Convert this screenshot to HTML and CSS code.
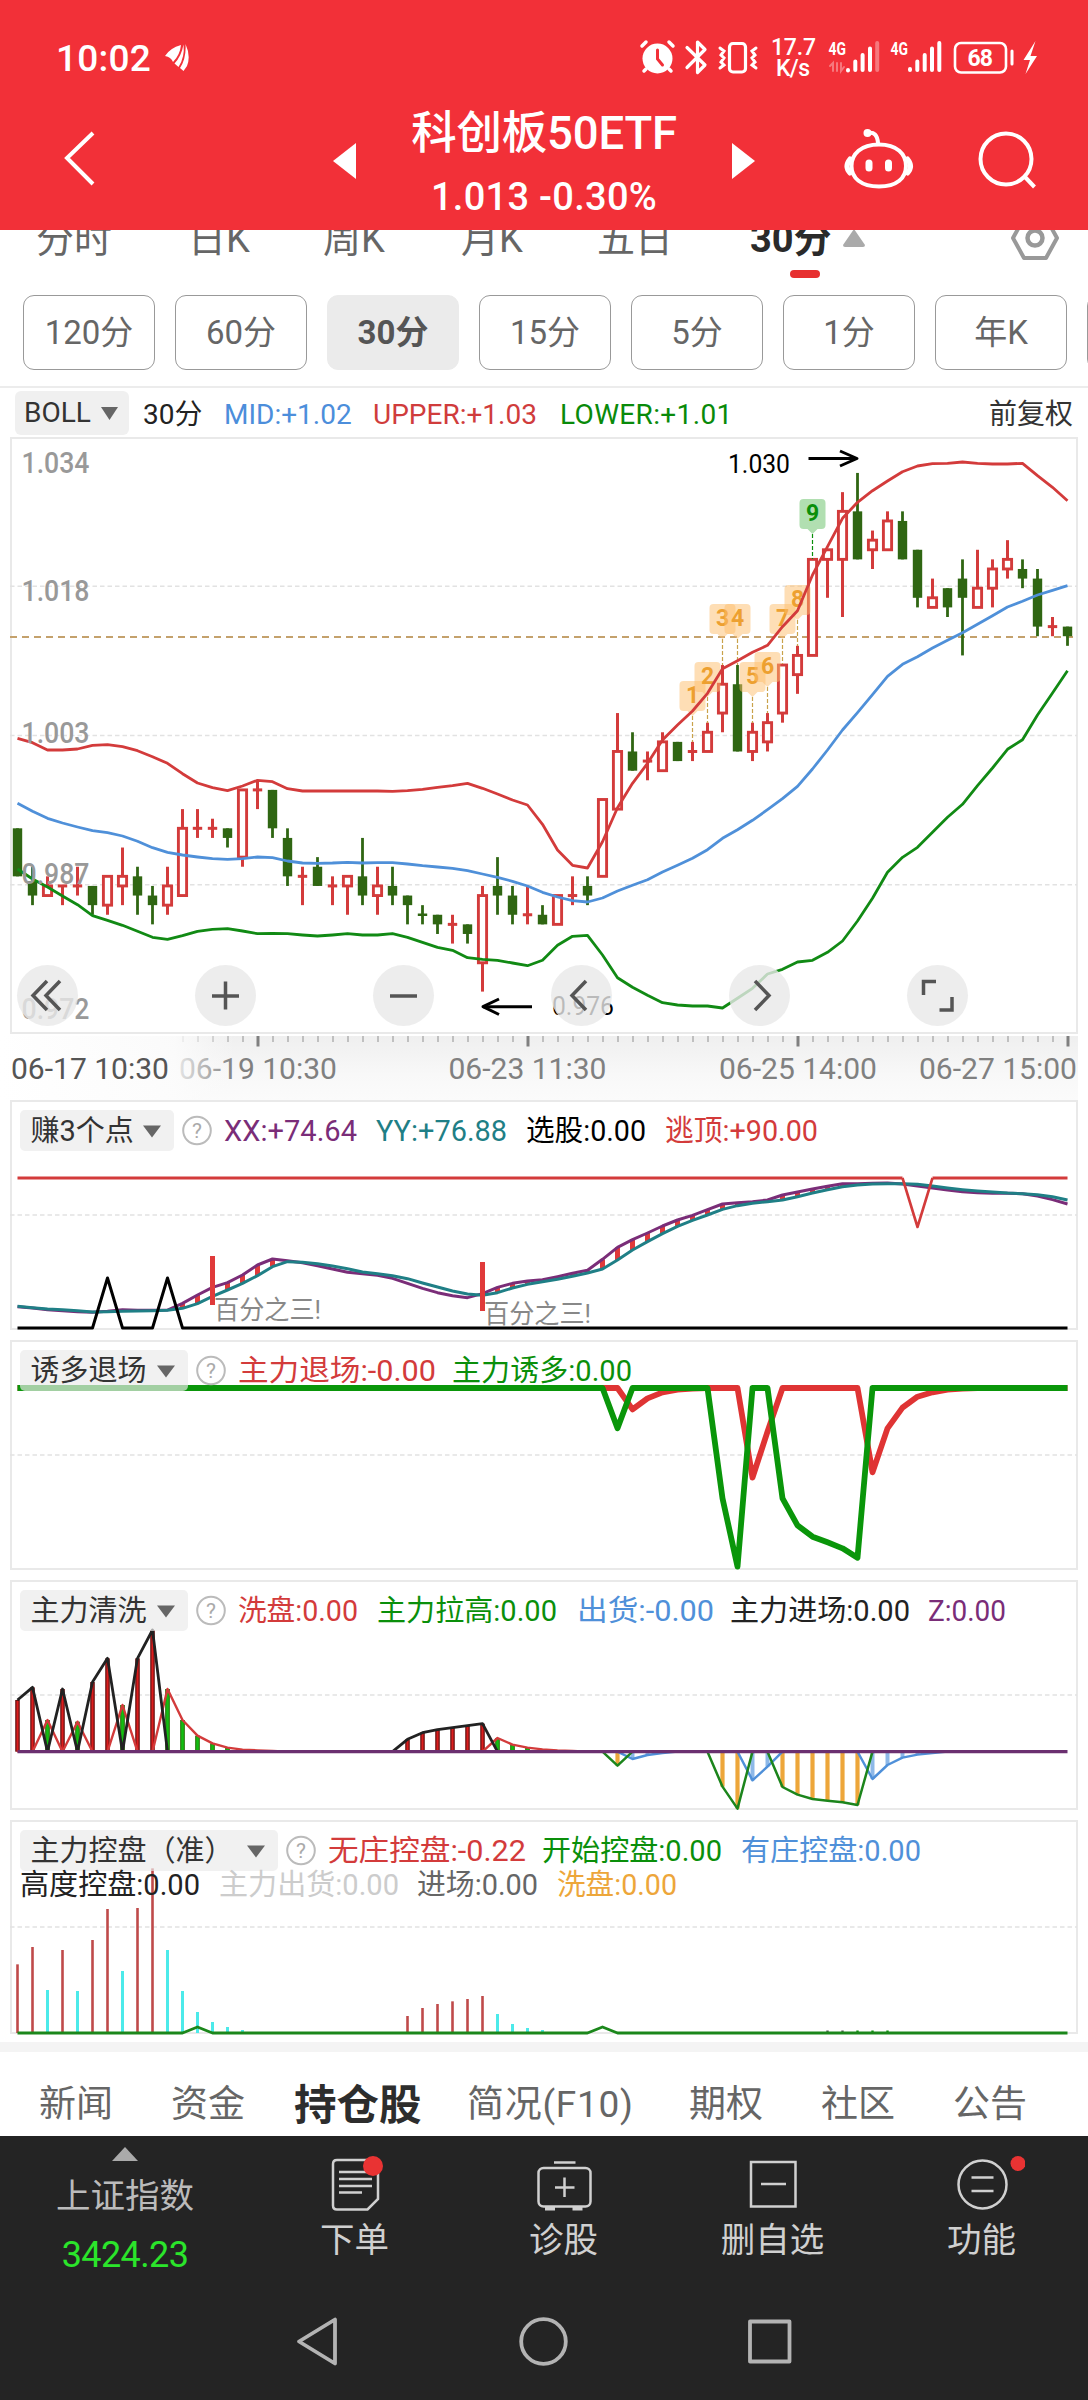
FILE: index.html
```html
<!DOCTYPE html>
<html lang="zh-CN">
<head>
<meta charset="utf-8">
<title>科创板50ETF</title>
<link rel="stylesheet" href="styles.css">
</head>
<body>
<div class="app">
  <header class="header">
    <div class="status">
      <span class="clock">10:02</span>
      <svg class="feather" width="26" height="30" viewBox="164 43 26 30" fill="#fff"><path d="M165 56Q170 48 181 45Q180 55 173 62Q171 57 165 56z"/><path d="M183.500 44.500Q185 57 178.500 67L174.500 63.500Q181.500 56 183.500 44.500z"/><path d="M185.500 44Q191 56 187 66L183.500 71L180 68Q186.500 58 185.500 44z"/></svg>
      <svg class="status-icons" width="410" height="60" viewBox="636 30 410 60" fill="none" stroke="#fff" stroke-linecap="round">
        <circle cx="657.500" cy="58.500" r="15" fill="#fff" stroke="none"/>
        <path d="M642 46l4-4M673 46l-4-4M646 69l-2 2M669 69l2 2" stroke-width="3.500"/>
        <path d="M657.500 50v9l5 6" stroke="#f23038" stroke-width="3"/>
        <path d="M687 47.500L705 65L697.500 72.500V42L705 49.500L687 67.500" stroke-width="3.200" stroke-linejoin="round"/>
        <rect x="729.500" y="43.500" width="16" height="28.500" rx="3.500" stroke-width="3.200"/>
        <path d="M720 48l4 3l-3 4l3 3l-3 4l3 3l-4 3M756 48l-4 3l3 4l-3 3l3 4l-3 3l4 3" stroke-width="3"/>
        <g fill="#fff" stroke="none">
          <text x="771" y="54.500" class="st-speed" textLength="45">17.7</text>
          <text x="776" y="75.500" class="st-speed" textLength="34">K/s</text>
          <text x="828.500" y="55" class="st-net" textLength="17.500" lengthAdjust="spacingAndGlyphs">4G</text>
          <text x="890.500" y="55" class="st-net" textLength="17.500" lengthAdjust="spacingAndGlyphs">4G</text>
          <text x="967.500" y="66" class="st-batt" textLength="25.500">68</text>
          <path d="M1035.500 41l-12 19h6.500l-4.500 14l11.500-18h-6.500z"/>
        </g>
        <path d="M833 71v-8l-3 3M837 63v8M841 63v8l3-4" stroke-width="2" opacity=".35"/>
        <path d="M848 70v.5M855.300 61.500V70M862.600 55V70M870 48.500V70M910 69v1M917.300 61.500V70M924.700 55V70M932 48.500V70M939.300 43V70" stroke-width="4"/>
        <path d="M877.200 43V70" stroke-width="4" opacity=".35"/>
        <rect x="955" y="43" width="51" height="29.500" rx="6" stroke-width="2.600"/>
        <path d="M1012 51v13" stroke-width="3"/>
      </svg>
    </div>
    <nav class="titlebar">
      <svg class="back" width="34" height="58" viewBox="62 129 34 58"><path d="M93 133L67 158L93 184" fill="none" stroke="#fff" stroke-width="4"/></svg>
      <svg class="prev" width="23" height="36" viewBox="0 0 23 36"><path d="M23 0V36L0 18z" fill="#fff"/></svg>
      <div class="title">
        <h1>科创板50ETF</h1>
        <p>1.013 -0.30%</p>
      </div>
      <svg class="next" width="23" height="36" viewBox="0 0 23 36"><path d="M0 0V36L23 18z" fill="#fff"/></svg>
      <svg class="robot" width="70" height="64" viewBox="844 127 70 64" fill="none" stroke="#fff" stroke-width="4" stroke-linecap="round">
        <path d="M879 144.500C897 144.500 906 154 906 166S897 186.500 879 186.500S851.500 178 851.500 166S861 144.500 879 144.500z"/>
        <path d="M850 159q-6 7.500 0 14M907.500 159q6 7.500 0 14" stroke-width="5"/>
        <path d="M869 163v5M888.500 163v5" stroke-width="7"/>
        <path d="M868 133q9-2 10 10"/><circle cx="867.500" cy="133" r="4" fill="#fff" stroke="none"/>
      </svg>
      <svg class="search" width="62" height="62" viewBox="976 129 62 62" fill="none" stroke="#fff" stroke-width="4"><circle cx="1006" cy="159" r="25.500"/><path d="M1024.500 176.500L1034.500 187"/></svg>
    </nav>
  </header>

  <section class="tabs">
    <span>分时</span><span>日K</span><span>周K</span><span>月K</span><span>五日</span>
    <span class="on">30分</span>
    <svg class="tab-up" width="22" height="18" viewBox="0 0 22 18"><path d="M11 0L22 16q0 2-2 2H2q-2 0-2-2z" fill="#aaa"/></svg>
    <svg class="gear" width="50" height="46" viewBox="0 0 50 46" fill="none" stroke="#999" stroke-width="4" stroke-linejoin="round"><path d="M14 3H36L47 23L36 43H14L3 23z"/><circle cx="25" cy="23" r="7.500" stroke-width="4.500"/></svg>
  </section>
  <section class="periods">
    <button>120分</button><button>60分</button><button class="on">30分</button><button>15分</button><button>5分</button><button>1分</button><button>年K</button><button></button>
  </section>

  <section class="boll">
    <span class="drop">BOLL<svg width="17" height="13" viewBox="0 0 17 13"><path d="M0 0H17L8.500 13z" fill="#666"/></svg></span>
    <span class="p">30分</span><span class="mid">MID:+1.02</span><span class="up">UPPER:+1.03</span><span class="low">LOWER:+1.01</span>
    <span class="adj">前复权</span>
  </section>

  <section class="main-chart">
    <svg id="kline" width="1088" height="600" viewBox="0 436 1088 600"></svg>
    <div class="tools">
      <button><svg viewBox="0 0 61 61"><path d="M30 16L16 30.500L30 45M43 16L29 30.500L43 45"/></svg></button>
      <button><svg viewBox="0 0 61 61"><path d="M17 31H44M30.500 16.500V44.500"/></svg></button>
      <button><svg viewBox="0 0 61 61"><path d="M17 31H44"/></svg></button>
      <button><svg viewBox="0 0 61 61"><path d="M35 16L21 30.500L35 45"/></svg></button>
      <button><svg viewBox="0 0 61 61"><path d="M26 16L40 30.500L26 45"/></svg></button>
      <button><svg viewBox="0 0 61 61"><path d="M16.500 30V16.500H29M45 32V45H32.500"/></svg></button>
    </div>
  </section>
  <svg id="axis" class="block" width="1088" height="64" viewBox="0 1036 1088 64"></svg>
  <svg id="p1" class="block" width="1088" height="240" viewBox="0 1100 1088 240"></svg>
  <svg id="p2" class="block" width="1088" height="240" viewBox="0 1340 1088 240"></svg>
  <svg id="p3" class="block" width="1088" height="240" viewBox="0 1580 1088 240"></svg>
  <svg id="p4" class="block" width="1088" height="222" viewBox="0 1820 1088 222"></svg>

  <nav class="sections">
    <span>新闻</span><span>资金</span><span class="on">持仓股</span><span>简况(F10)</span><span>期权</span><span>社区</span><span>公告</span>
  </nav>

  <footer class="bottom">
    <div class="actions">
      <div class="index">
        <svg width="26" height="14" viewBox="0 0 26 14"><path d="M13 0L26 14H0z" fill="#aaa"/></svg>
        <b>上证指数</b><i>3424.23</i>
      </div>
      <div class="act">
        <svg width="60" height="64" viewBox="325 2152 60 64"><path d="M337 2160H374Q378 2160 378 2164V2199L367.500 2209.500H337Q333 2209.500 333 2205.500V2164Q333 2160 337 2160z"/><path d="M339 2172H372M339 2179H372M339 2186H372M339 2192.500H362"/><circle class="dot" cx="373" cy="2166" r="10"/></svg>
        <span>下单</span>
      </div>
      <div class="act">
        <svg width="60" height="64" viewBox="534 2152 60 64"><rect x="538.500" y="2168" width="52" height="38.500" rx="5"/><path d="M554 2162.500H575.500M555 2187.500H574.500M564.500 2177.500V2197"/><path d="M545 2208.500H555M572.500 2208.500H582.500" stroke-width="4"/></svg>
        <span>诊股</span>
      </div>
      <div class="act">
        <svg width="60" height="64" viewBox="743 2152 60 64"><rect x="751" y="2162" width="44.500" height="44.500"/><path d="M761 2184H786"/></svg>
        <span>删自选</span>
      </div>
      <div class="act">
        <svg width="86" height="64" viewBox="939 2152 86 64"><circle cx="982.500" cy="2184.500" r="24"/><path d="M971.500 2177.500H993.500M971.500 2191H993.500"/><circle class="dot" cx="1018" cy="2163.500" r="7.500"/></svg>
        <span>功能</span>
      </div>
    </div>
    <div class="sysnav">
      <svg width="500" height="56" viewBox="294 2313 500 56" fill="none" stroke="#b3b3b3" stroke-width="3.800" stroke-linejoin="round"><path d="M335 2319.500V2363.500L299 2341.500z"/><circle cx="543.500" cy="2341.500" r="22.300"/><rect x="750" y="2321.500" width="39.500" height="40"/></svg>
    </div>
  </footer>
</div>
<script src="charts.js"></script>
</body>
</html>
```
FILE: styles.css
```css
* { box-sizing: border-box; margin: 0; padding: 0; }
body { background: #fff; font-family: Roboto, "Noto Sans CJK SC", sans-serif; color: #333; }
.app { width: 1088px; height: 2400px; overflow: hidden; display: flex; flex-direction: column; }
.app > * { flex: none; }
button { font: inherit; color: inherit; border: 0; background: none; }
.block { display: block; }

.header { height: 230px; background: #f23038; color: #fff; position: relative; z-index: 1; }
.status { height: 100px; display: flex; align-items: flex-start; padding: 30px 0 0 56px; }
.clock { font-size: 37px; font-weight: 500; line-height: 57px; width: 108px; letter-spacing: .2px; }
.feather { margin-top: 13px; }
.status-icons { margin-left: 446px; }
.st-speed { font-size: 23px; font-weight: 500; }
.st-net { font-size: 18.500px; font-weight: 700; }
.st-batt { font-size: 23px; font-weight: 700; }
.titlebar { display: flex; align-items: flex-start; }
.back { margin: 29px 0 0 62px; }
.prev { margin: 43px 0 0 237px; }
.title { width: 376px; display: flex; flex-direction: column; align-items: center; }
.title h1 { font-size: 45.500px; font-weight: 500; line-height: 60px; margin-top: 4px; white-space: nowrap; letter-spacing: -.2px; }
.title p { font-size: 38px; font-weight: 500; line-height: 50px; margin-top: 8px; letter-spacing: .3px; white-space: nowrap; }
.next { margin-top: 43px; }
.robot { margin: 27px 0 0 89px; }
.search { margin: 29px 0 0 62px; }

.tabs { height: 65px; display: flex; align-items: flex-start; padding-left: 36px; font-size: 38px; line-height: 56px; color: #666; overflow: hidden; }
.tabs span { margin-top: -19px; white-space: nowrap; }
.tabs span:nth-child(1) { width: 152px; }
.tabs span:nth-child(2) { width: 135px; }
.tabs span:nth-child(3) { width: 138px; }
.tabs span:nth-child(4) { width: 136px; }
.tabs span:nth-child(5) { width: 153px; }
.tabs .on { width: 93px; color: #2a2a2a; font-weight: 700; display: flex; flex-direction: column; }
.tabs .on::after { content: ""; width: 30px; height: 8px; border-radius: 4px; background: #e73030; margin: 3px 0 0 40px; }
.tab-up { margin-top: -1px; }
.gear { margin: -15px 0 0 145px; }

.periods { height: 93px; display: flex; gap: 20px; padding-left: 23px; overflow: hidden; border-bottom: 2px solid #ececec; }
.periods button { flex: none; width: 132px; height: 75px; border: 1.500px solid #999; border-radius: 11px; font-size: 33px; line-height: 72px; color: #666; }
.periods .on { background: #ebebeb; border-color: #ebebeb; font-weight: 700; color: #555; }

.boll { height: 48px; padding: 3px 0 0 15px; display: flex; align-items: flex-start; font-size: 28px; line-height: 48px; white-space: nowrap; }
.drop { width: 114px; height: 44px; background: #f0f0f0; border-radius: 6px; padding-left: 9px; display: flex; align-items: center; gap: 10px; }
.boll .p { width: 81px; margin-left: 14px; color: #222; }
.mid { width: 149px; color: #4c8edb; }
.up { width: 187px; color: #d03c3c; }
.low { color: #098a0a; flex: 1; letter-spacing: .35px; }
.adj { margin-right: 15px; }

.main-chart { height: 600px; position: relative; }
.main-chart > svg { display: block; }
.tools { position: absolute; left: 17px; top: 529px; display: flex; gap: 117px; }
.tools button { width: 61px; height: 61px; border-radius: 50%; background: rgba(232, 232, 232, .8); }
.tools svg { display: block; fill: none; stroke: #555; stroke-width: 3.500; }

svg text { font-family: Roboto, "Noto Sans CJK SC", sans-serif; }
.ylab { font-size: 29px; font-weight: 500; fill: #999; }
.xlab { font-size: 29px; fill: #808080; }
.xlab.first { fill: #555; }
.mark { font-size: 25px; fill: #000; }
.pin { font-size: 23px; font-weight: 700; text-anchor: middle; }
.legend { font-size: 29px; }
.name { font-size: 29px; fill: #333; }
.help { font-size: 21px; fill: #aaa; text-anchor: middle; }
.note { font-size: 26px; fill: #888; }

.sections { height: 94px; border-top: 10px solid #f4f4f4; display: flex; align-items: center; padding: 14px 0 0 39px; font-size: 37px; color: #666; white-space: nowrap; }
.sections span:nth-child(1) { width: 132px; }
.sections span:nth-child(2) { width: 123px; }
.sections span:nth-child(3) { width: 173px; font-size: 42.500px; font-weight: 700; color: #2d2d2d; }
.sections span:nth-child(4) { width: 222px; letter-spacing: .7px; }
.sections span:nth-child(5) { width: 132px; }
.sections span:nth-child(6) { width: 132px; }

.bottom { height: 264px; background: #242424; color: #d0d0d0; }
.actions { height: 160px; display: flex; }
.index { width: 250px; display: flex; flex-direction: column; align-items: center; padding-top: 11px; }
.index b { font-weight: 400; font-size: 34.500px; line-height: 50px; margin-top: 10px; color: #bbb; }
.index i { font-style: normal; font-size: 36px; line-height: 50px; margin-top: 9px; color: #2be52b; letter-spacing: -.6px; }
.act { width: 209px; display: flex; flex-direction: column; align-items: center; padding-top: 16px; font-size: 34.500px; }
.act span { line-height: 50px; margin-top: -1px; }
.act svg { fill: none; stroke: #d0d0d0; stroke-width: 2.500; }
.act .dot { fill: #e93333; stroke: none; }
.sysnav { padding: 17px 0 0 294px; }
```
FILE: charts.js
```js
const NS = 'http://www.w3.org/2000/svg';
const X = i => 17.5 + 15 * i;
const RED = '#d33b3b', GREEN = '#0a8f0a', DARK = '#2f6612', BLUE = '#4f90d9', PURPLE = '#7a2d78', TEAL = '#1f7f86', ORANGE = '#eda63a';

function add(parent, tag, attrs, text) {
  const el = document.createElementNS(NS, tag);
  for (const k in attrs) el.setAttribute(k, attrs[k]);
  if (text !== undefined) el.textContent = text;
  parent.appendChild(el);
  return el;
}
const get = id => document.getElementById(id);
const line = (p, x1, y1, x2, y2, stroke, w, extra) => add(p, 'line', { x1, y1, x2, y2, stroke, 'stroke-width': w, ...extra });
const poly = (p, pts, stroke, w) => add(p, 'polyline', { points: pts.map(a => a.join(',')).join(' '), fill: 'none', stroke, 'stroke-width': w, 'stroke-linejoin': 'round' });
const label = (p, cls, x, y, s, len, fill) => {
  const a = { class: cls, x, y };
  if (len) { a.textLength = len; a.lengthAdjust = 'spacingAndGlyphs'; }
  if (fill) a.style = 'fill:' + fill;
  return add(p, 'text', a, s);
};
const frame = (p, top, bottom) => add(p, 'rect', { x: 11, y: top, width: 1066, height: bottom - top, fill: '#fff', stroke: '#e9e9e9', 'stroke-width': 2 });
const grid = (p, y) => line(p, 10, y, 1077, y, '#e2e2e2', 1.5, { 'stroke-dasharray': '4.5 3' });

/* price chart: candles are [open/close top, bottom, high, low, kind], in thousandths */
const candles = [
  [993,988,993,988,'g'],[987.5,986,989,985,'g'],[987,986,988,986,'r'],[987,987,987,985,'r'],[987,987,989,986,'r'],
  [987,985,987,984,'g'],[988,985,988,984,'r'],[988,987,991,985,'r'],[988,986,989,984,'g'],[986,985,987,983,'g'],
  [987,985,989,984,'r'],[993,986,995,986,'r'],[993,993,995,992,'r'],[993,993,994,992,'r'],[993,992,993,991,'g'],
  [997,990,997,989,'r'],[997,997,998,995,'r'],[997,993,997,992,'g'],[992,988,993,987,'g'],[988,988,989,985,'r'],
  [989,987,990,987,'g'],[987,987,988,985,'r'],[988,987,988,984,'r'],[988,986,992,985,'g'],[987,986,989,984,'r'],
  [987,986,989,985,'g'],[986,985,986,983,'g'],[984,984,985,983,'g'],[984,983,984,982,'g'],[983,983,984,981,'r'],
  [983,982,983,981,'g'],[986,979,987,976,'r'],[987,986,990,984,'g'],[986,984,987,983,'g'],[984,984,987,983,'r'],
  [984,983,985,983,'g'],[986,983,986,983,'r'],[986,986,988,985,'r'],[987,986,988,985,'g'],[996,988,996,988,'r'],
  [1001,995,1005,995,'r'],[1001,999,1003,999,'g'],[1000,1000,1001,998,'r'],[1002,999,1003,999,'r'],[1002,1000,1002,1000,'g'],
  [1001,1001,1002,1000,'r'],[1003,1001,1004,1001,'r'],[1008,1005,1010,1003,'r'],[1008,1001,1010,1001,'g'],[1003,1001,1004,1000,'r'],
  [1004,1002,1005,1001,'r'],[1010,1005,1010,1004,'r'],[1011,1009,1012,1007,'r'],[1021,1011,1021,1011,'r'],[1022,1021,1022,1017,'r'],
  [1026,1021,1028,1015,'r'],[1026,1021,1030,1021,'g'],[1023,1022,1024,1020,'r'],[1025,1022,1026,1022,'r'],[1025,1021,1026,1021,'g'],
  [1022,1017,1022,1016,'g'],[1017,1016,1019,1016,'r'],[1018,1016,1018,1015,'g'],[1019,1017,1021,1011,'g'],[1018,1016,1022,1016,'r'],
  [1020,1018,1021,1016,'r'],[1021,1020,1023,1019,'r'],[1020,1019,1021,1018,'g'],[1019,1014,1020,1013,'g'],[1014,1014,1015,1013,'r'],
  [1014,1013,1014,1012,'g']
];
const upper = [738.3,742.7,750,750,749,745.3,744.7,746.7,750.7,756.7,763.3,773.7,783,787.7,790.7,786,780.3,781.7,788.7,791,791,791,791,791,791,791.3,790.7,789.3,787.3,785.7,783.3,788.3,794,800,805,824.3,850,865.3,868,841.7,807.7,783.3,763.3,740,725,711,693.3,668.7,660.7,652.3,645.3,626.7,610.7,575,546.7,518.3,502.3,490.7,481,471.7,466,463.7,463.3,462,463.3,464,464,463.3,475.7,487.3,500.7];
const middle = [803.3,811.3,818.3,823,827,830.7,832.7,836,841.3,847.7,852.3,855,857,858.7,859.3,858.7,857,857.7,861,863,863.3,863,862.3,863,862.7,862.7,864,865.7,867,868.3,870.7,874,877.3,881.3,886,892.3,897,900.7,902,898,891,885.3,879.7,872,865.3,858.3,849.7,838.3,829.7,820.3,809.7,798.7,786.3,769,750,730,712.7,694.7,676.3,664.3,656.7,648,640.3,632.7,624.3,615.7,607,601.3,595,590.3,585.7];
const lower = [869,879,887,896,904.7,915.7,920.3,925.3,931.3,937.3,939.3,935.7,931.3,929.3,928.7,931,933.7,933.3,933.7,935,936,935,933.7,935,935,933.7,937.3,942.3,947.3,950.3,957.7,959.3,960.3,963,965.7,960.3,945.3,936.3,935.3,955,977.7,987.3,995.3,1002.7,1005,1006,1006,1008,998.3,988.3,974,969.3,962,960.3,952.3,941,921,898.3,872.3,857.3,847.3,832.3,817.3,804.3,785.7,768,749.3,739.7,715,693,670.7];
{
  const p = get('kline'), Y = v => 991.6 - (v - 976) * 9.605;
  frame(p, 438, 1033);
  [586.3, 735.5, 884.7].forEach(y => grid(p, y));
  line(p, 10, 637, 1077, 637, '#c4a16c', 2, { 'stroke-dasharray': '7 5' });
  candles.forEach(([t, b, h, l, k], i) => {
    const x = X(i);
    if (k === 'g') {
      line(p, x, Y(h), x, Y(l), DARK, 2.8);
      if (t === b) line(p, x - 4.7, Y(t), x + 4.7, Y(t), DARK, 2.5);
      else add(p, 'rect', { x: x - 4.7, y: Y(t), width: 9.4, height: Y(b) - Y(t), fill: DARK });
    } else if (t === b) {
      line(p, x, Y(h), x, Y(l), RED, 3);
      line(p, x - 4.7, Y(t), x + 4.7, Y(t), RED, 3);
    } else {
      line(p, x, Y(h), x, Y(t), RED, 3);
      line(p, x, Y(b), x, Y(l), RED, 3);
      add(p, 'rect', { x: x - 4.1, y: Y(t), width: 8.2, height: Y(b) - Y(t), fill: '#fff', stroke: RED, 'stroke-width': 2.9 });
    }
  });
  [[45,681,742],[46,662,723],[47,604,665],[48,604,665],[49,662,723],[50,652,713],[51,604,664],[52,585,646],[53,499,559]].forEach(([i, y, end], n) => {
    const x = X(i), g = n === 8, c = g ? '#0a8f0a' : '#eda030';
    line(p, x, y + 35, x, end, g ? c : '#c9a24a', 1.2, { 'stroke-dasharray': '4 2' });
    add(p, 'path', { d: `M${x - 9} ${y}h18q4 0 4 4v22q0 4-4 4h-4l-5 5l-5-5h-4q-4 0-4-4v-22q0-4 4-4z`, fill: g ? '#9bd69b' : '#fdbd6b', 'fill-opacity': g ? .78 : .5 });
    label(p, 'pin', x, y + 22, n + 1, 0, c);
  });
  [[upper, RED], [middle, BLUE], [lower, '#118a14']].forEach(([s, c]) => poly(p, s.map((y, i) => [X(i), y]), c, 2.8));
  [['1.034',473],['1.018',601],['1.003',742.5],['0.987',884],['0.972',1019]].forEach(([s, y]) => label(p, 'ylab', 21.5, y, s, 68));
  label(p, 'mark', 728, 472.7, '1.030', 62);
  label(p, 'mark', 552, 1015, '0.976', 62);
  poly(p, [[808.5,458.5],[856,458.5]], '#000', 3);
  poly(p, [[840,451],[857,458.5],[840,466]], '#000', 3);
  poly(p, [[532,1006.7],[483,1006.7]], '#000', 3);
  poly(p, [[499,999],[483,1006.7],[499,1014.5]], '#000', 3);
}

/* time axis */
{
  const p = get('axis');
  const d = add(p, 'defs', {});
  const v = add(d, 'linearGradient', { id: 'shade', x1: 0, y1: 0, x2: 0, y2: 1 });
  add(v, 'stop', { offset: 0, 'stop-color': '#efefef' });
  add(v, 'stop', { offset: .6, 'stop-color': '#f8f8f8' });
  add(v, 'stop', { offset: 1, 'stop-color': '#fbfbfb' });
  const h = add(d, 'linearGradient', { id: 'fade', x1: 0, y1: 0, x2: 1, y2: 0 });
  add(h, 'stop', { offset: 0, 'stop-color': '#fff' });
  add(h, 'stop', { offset: .74, 'stop-color': '#fcfcfc', 'stop-opacity': .88 });
  add(h, 'stop', { offset: 1, 'stop-color': '#fafafa', 'stop-opacity': 0 });
  add(p, 'rect', { x: 0, y: 1036, width: 1078, height: 64, fill: 'url(#shade)' });
  for (let i = 11; i <= 70; i++) {
    const major = [16, 34, 52, 70].includes(i);
    line(p, X(i) + .5, 1034, X(i) + .5, major ? 1046.5 : 1042, major ? '#808080' : '#c0c0c0', major ? 3 : 2);
  }
  [[179,'06-19 10:30'],[448.500,'06-23 11:30'],[719,'06-25 14:00'],[919,'06-27 15:00']].forEach(([x, s]) => label(p, 'xlab', x, 1079, s, 158));
  add(p, 'rect', { x: 0, y: 1036, width: 235, height: 64, fill: 'url(#fade)' });
  label(p, 'xlab first', 11, 1079, '06-17 10:30', 158);
}

function head(p, top, name, width, items) {
  add(p, 'rect', { x: 20, y: top + 9, width, height: 41, rx: 5, fill: '#ebebeb', 'fill-opacity': .68 });
  label(p, 'name', 30.5, top + 40, name);
  const tx = 20 + width - 31;
  add(p, 'path', { d: `M${tx} ${top + 24.5}h18l-9 12z`, fill: '#666' });
  const cx = 20 + width + 23;
  add(p, 'circle', { cx, cy: top + 29.5, r: 13.8, fill: 'none', stroke: '#bbb', 'stroke-width': 2 });
  label(p, 'help', cx, top + 37, '?');
  items.forEach(([s, x1, x2, c, dy]) => label(p, 'legend', x1 - 1, top + 40 + (dy || 0), s, x2 - x1 + 2, c));
}

/* panel values are in thirds of a pixel below the panel offset */
const at = off => v => off + v / 3;

{
  const p = get('p1'), Y = at(1090);
  frame(p, 1101, 1329);
  grid(p, 1215);
  const xx = [650,654,659,662,665,667,664,659,661,661,660,640,615,592,578,555,525,507,512,518,527,537,547,551,556,565,580,595,608,617,623,611,592,580,573,569,560,550,541,508,472,449,429,408,390,376,359,342,338,335,330,315,306,297,289,281,281,280,279,282,288,294,300,305,308,310,310,311,318,329,342];
  const yy = [649,653,657,659,662,666,665,664,663,662,661,655,641,619,600,580,557,530,515,517,521,528,536,546,551,557,566,579,591,603,612,616,608,594,583,575,568,559,549,537,510,480,455,431,409,391,375,358,347,340,335,330,320,309,299,290,285,282,281,281,283,288,294,299,303,306,309,311,314,320,330];
  xx.forEach((v, i) => { if (yy[i] - v > 5) line(p, X(i), Y(v), X(i), Y(yy[i]), '#e03a3a', 5); });
  poly(p, xx.map((v, i) => [X(i), Y(v)]), PURPLE, 3);
  poly(p, yy.map((v, i) => [X(i), Y(v)]), TEAL, 3);
  line(p, X(0), 1178, X(59), 1178, RED, 3);
  line(p, X(61), 1178, X(70), 1178, RED, 3);
  poly(p, [[X(59),1178],[X(60),1227],[X(61),1178]], RED, 2.6);
  const spike = i => [[X(i - 1),1328],[X(i),1278],[X(i + 1),1328]];
  poly(p, [[X(0),1328], ...spike(6), ...spike(10), [X(70),1328]], '#000', 3);
  line(p, X(13), 1256, X(13), 1305, '#e03a3a', 5);
  line(p, X(31), 1262, X(31), 1311, '#e03a3a', 5);
  label(p, 'note', 214, 1319, '百分之三!', 107);
  label(p, 'note', 484, 1323, '百分之三!', 107);
  head(p, 1101, '赚3个点', 154, [['XX:+74.64',225,356,PURPLE],['YY:+76.88',377,506,TEAL],['选股:0.00',527,645,'#000'],['逃顶:+90.00',666,817,RED]]);
}
{
  const p = get('p2'), Y = at(1340);
  frame(p, 1341, 1569);
  grid(p, 1455);
  const red = { 41:208,42:175,43:157,44:149,45:146,49:413,50:275,57:397,58:265,59:203,60:170,61:157,62:149,63:146 };
  const green = { 40:265,47:475,48:680,51:475,52:556,53:590,54:607,55:625,56:653 };
  [[red, '#df3434'], [green, '#0a960a']].forEach(([s, c]) => {
    const pts = [];
    for (let i = 0; i <= 70; i++) pts.push([X(i), Y(s[i] || 144)]);
    poly(p, pts, c, 5.8);
  });
  head(p, 1341, '诱多退场', 168, [['主力退场:-0.00',239,435,RED],['主力诱多:0.00',453,631,GREEN]]);
}
{
  const p = get('p3'), Y = at(1570), B = 545;
  frame(p, 1581, 1809);
  grid(p, 1695);
  const rb = {0:390,1:352,3:357,5:336,6:265,8:265,9:180,26:508,27:488,28:479,29:473,30:467,31:461};
  const gb = {2:450,4:455,7:405,10:357,11:450,12:497,13:520,14:533,32:504,33:524,34:533};
  const ob = {40:587,47:650,48:716,51:651,52:674,53:687,54:692,55:697,56:705};
  const bb = {41:567,42:555,43:549,49:631,50:590,57:627,58:585,59:563,60:554,61:549};
  const seg = (s, c, a, b, w) => {
    const pts = [];
    for (let i = a; i <= b; i++) pts.push([X(i), Y(s[i] || B)]);
    poly(p, pts, c, w);
  };
  for (const i in rb) { line(p, X(+i), Y(rb[i]), X(+i), Y(B), '#6b1212', 4.6); line(p, X(+i), Y(rb[i]) + 1, X(+i), Y(B), '#dd1c1c', 2); }
  for (const i in gb) { line(p, X(+i), Y(gb[i]), X(+i), Y(B), '#2f7a12', 4.8); line(p, X(+i), Y(gb[i]) + 1, X(+i), Y(B), '#10c010', 2.4); }
  for (const i in ob) line(p, X(+i), Y(B), X(+i), Y(ob[i]), ORANGE, 4.2);
  for (const i in bb) line(p, X(+i), Y(B), X(+i), Y(bb[i]), '#8db8e8', 4);
  seg({ ...gb, 15:539, 16:541, 17:543, 35:538, 36:541, 37:543 }, RED, 0, 40, 2.4);
  seg(rb, '#222', 0, 10, 2.8);
  seg(rb, '#222', 25, 32, 2.8);
  seg(bb, BLUE, 40, 62, 2.4);
  seg(ob, '#1c851c', 39, 41, 2.5);
  seg(ob, '#1c851c', 46, 57, 2.5);
  line(p, X(0), Y(B), X(70), Y(B), '#6b3070', 3.4);
  head(p, 1581, '主力清洗', 168, [['洗盘:0.00',239,357,RED],['主力拉高:0.00',378,556,GREEN],['出货:-0.00',578,713,BLUE],['主力进场:0.00',731,909,'#222'],['Z:0.00',929,1005,PURPLE]]);
}
{
  const p = get('p4'), Y = at(1570), B = 1389;
  frame(p, 1821, 2033);
  grid(p, 1927);
  const rb = {0:1183,1:1131,3:1140,5:1110,6:1017,8:1014,9:895,26:1338,27:1314,28:1302,29:1294,30:1287,31:1278};
  const cb = {2:1260,4:1263,7:1203,10:1140,11:1263,12:1326,13:1356,14:1371,15:1380,32:1332,33:1362,34:1374,35:1380};
  for (const i in rb) line(p, X(+i), Y(rb[i]), X(+i), Y(B), '#bf4a4a', 2.6);
  for (const i in cb) line(p, X(+i), Y(cb[i]), X(+i), Y(B), '#4ceaea', 3);
  [54, 55].forEach(i => line(p, X(i), 2030.5, X(i), 2033, '#555', 2.4));
  [56, 57, 58].forEach(i => line(p, X(i), 2030.5, X(i), 2033, GREEN, 2.4));
  const pts = [];
  for (let i = 0; i <= 70; i++) pts.push([X(i), i === 12 || i === 39 ? 2027 : 2033]);
  poly(p, pts, '#1b871b', 2.8);
  head(p, 1821, '主力控盘（准）', 258, [['无庄控盘:-0.22',329,525,RED],['开始控盘:0.00',543,721,GREEN],['有庄控盘:0.00',742,920,BLUE],
    ['高度控盘:0.00',21,199,'#222',33.7],['主力出货:0.00',220,398,'#ccc',33.7],['进场:0.00',418,537,'#666',33.7],['洗盘:0.00',558,676,ORANGE,33.7]]);
}
```
